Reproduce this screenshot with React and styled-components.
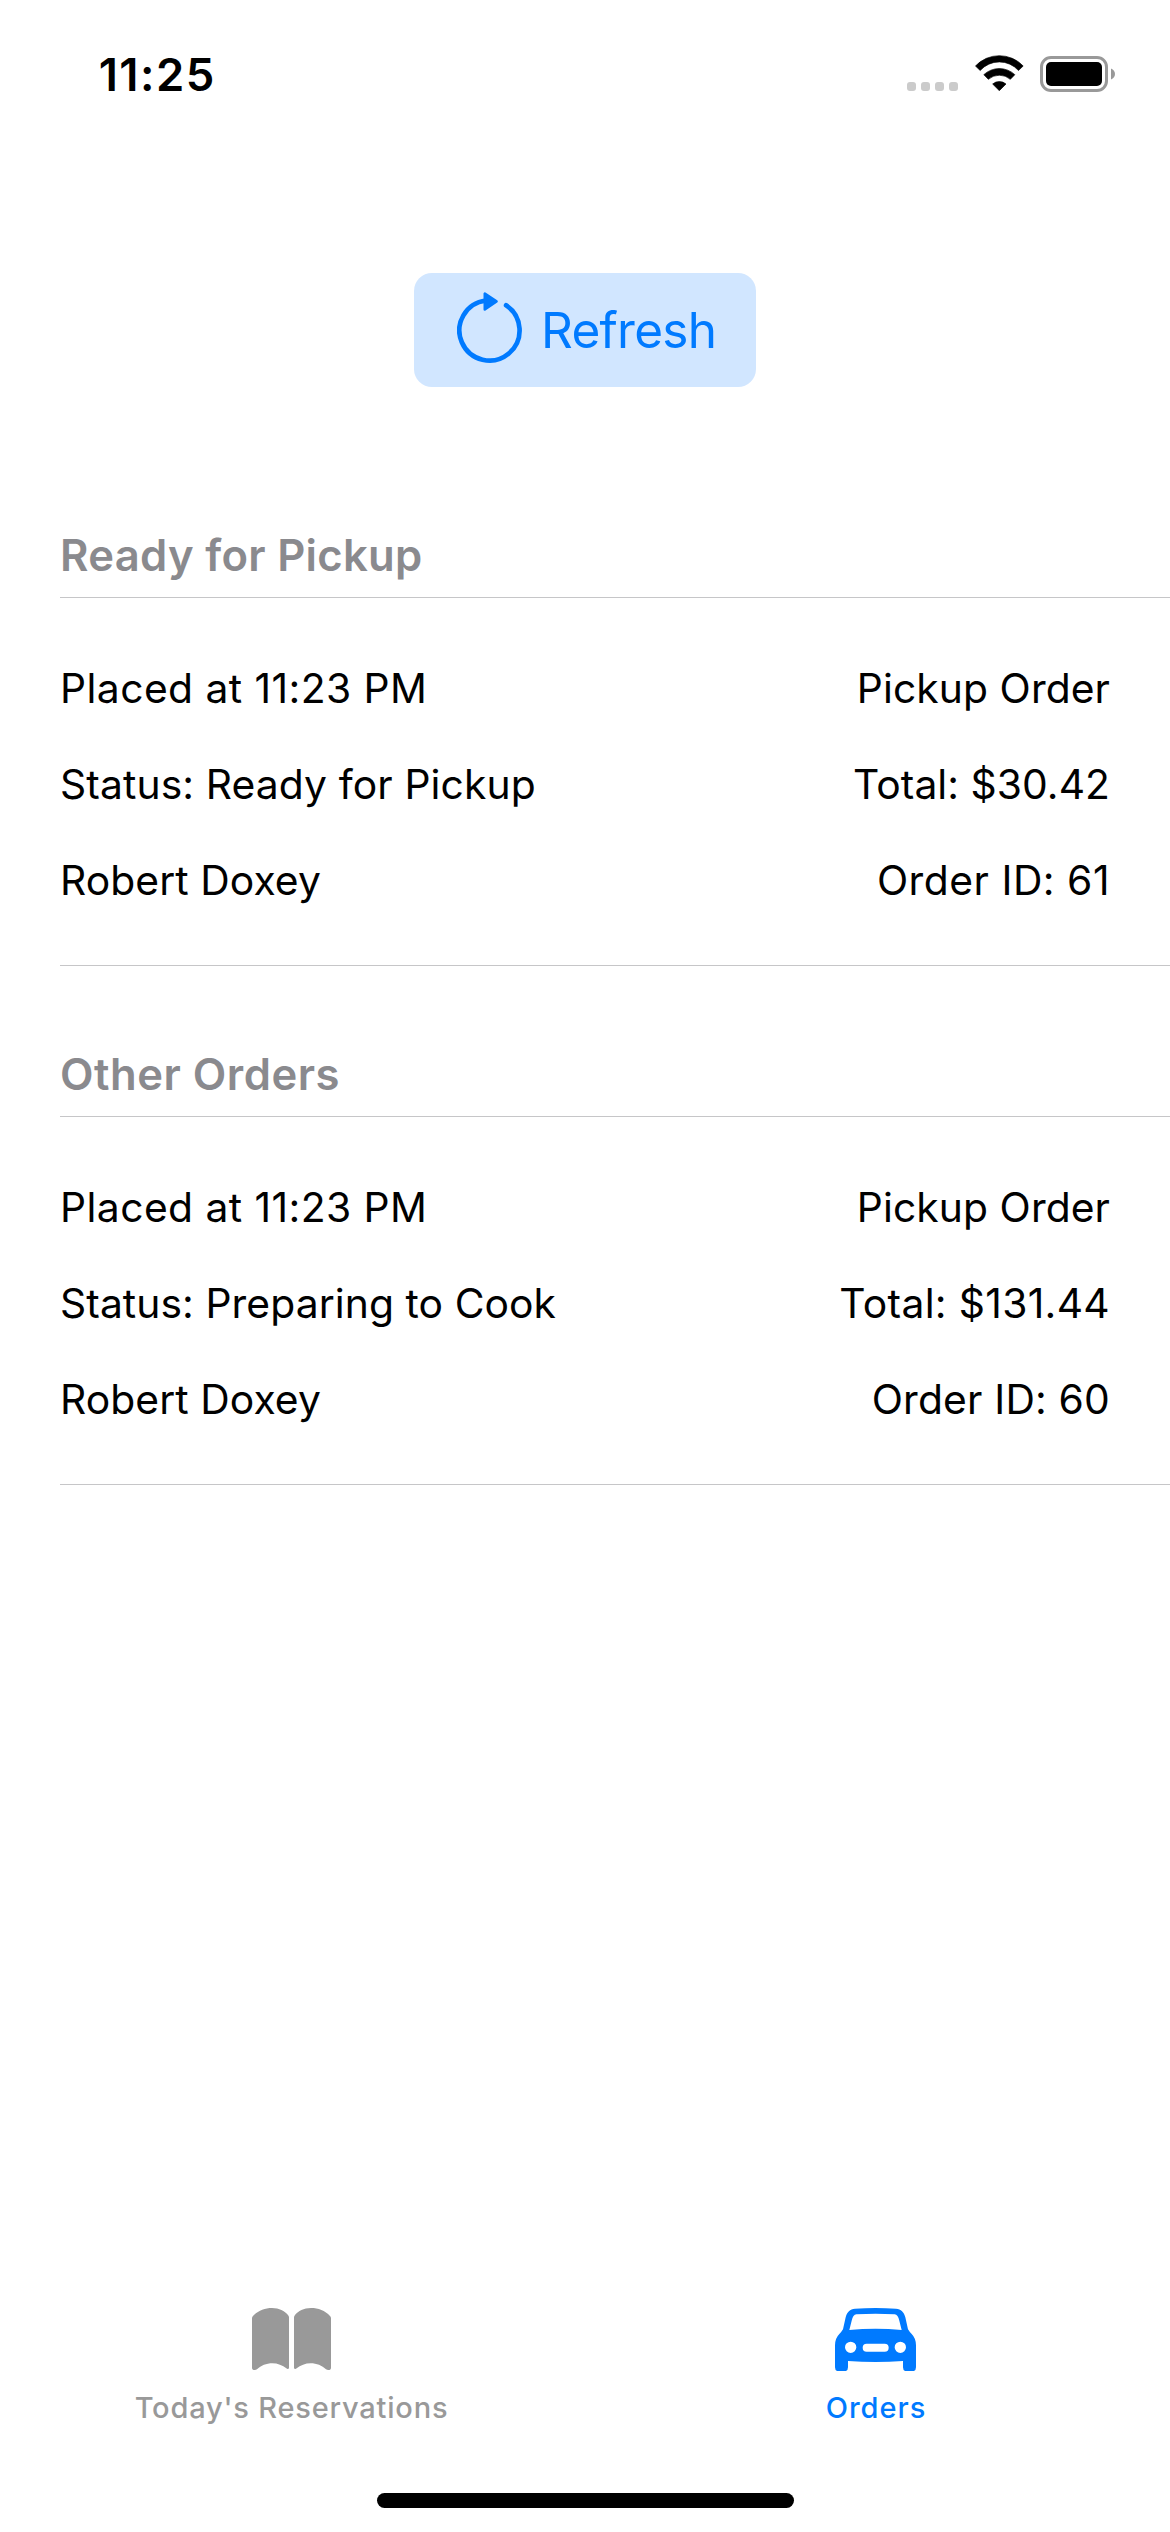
import React from 'react';
import styled, { createGlobalStyle } from 'styled-components';

const GlobalStyle = createGlobalStyle`
  * { box-sizing: border-box; }
  body {
    margin: 0;
    background: #fff;
    color: #000;
    font-family: Inter, "Liberation Sans", sans-serif;
  }
  svg { display: block; flex: none; }
`;

const Screen = styled.div`
  width: 1170px;
  height: 2532px;
  display: flex;
  flex-direction: column;
  background: #fff;
  overflow: hidden;
`;

const StatusBar = styled.header`
  height: 141px;
  flex: none;
  display: flex;
  justify-content: space-between;
  align-items: flex-start;
  padding: 45px 55px 0 98.7px;
`;

const Clock = styled.span`
  font-size: 45.4px;
  font-weight: 600;
  line-height: 59px;
  letter-spacing: 1.465px;
`;

const StatusIcons = styled.div`
  display: flex;
  align-items: flex-end;
  height: 47px;
`;

const SignalDots = styled.div`
  display: flex;
  gap: 5px;
  margin: 0 16.5px 1px 0;
`;

const Dot = styled.i`
  width: 9px;
  height: 9px;
  border-radius: 3px;
  background: #cbcbcb;
`;

const WifiSlot = styled.div`
  margin: 0 16.5px 1px 0;
`;

const Toolbar = styled.div`
  display: flex;
  justify-content: center;
  flex: none;
  padding: 132px 0 138px;
`;

const RefreshButton = styled.button`
  width: 342px;
  height: 114px;
  border: 0;
  border-radius: 18px;
  background: #d1e6ff;
  color: #007aff;
  display: flex;
  align-items: center;
  gap: 18px;
  padding: 0 0 0 43px;
  font-family: inherit;
  font-size: 49.5px;
  line-height: 60px;
  letter-spacing: -0.735px;
`;

const Orders = styled.main`
  flex: 1;
  display: flex;
  flex-direction: column;
  gap: 78px;
`;

const Section = styled.section`
  margin-left: 60px;
`;

const SectionTitle = styled.h2`
  margin: 0;
  border-bottom: 1px solid #c6c6c8;
  color: #8a8a8e;
  font-size: 43.6px;
  font-weight: 600;
  line-height: 62px;
  height: 73px;
  letter-spacing: ${(p) => p.$tracking}px;
`;

const OrderCard = styled.article`
  padding: 42px 60px 37px 0;
  border-bottom: 1px solid #c6c6c8;
`;

const OrderRow = styled.div`
  display: flex;
  justify-content: space-between;
  height: 96px;
  font-size: 40.8px;
  line-height: 96px;
  white-space: nowrap;
`;

const Field = styled.span`
  letter-spacing: ${(p) => p.$tracking}px;
`;

const TabBar = styled.nav`
  flex: none;
  display: grid;
  grid-template-columns: 583px 586px;
  height: 185px;
`;

const Tab = styled.a`
  display: flex;
  flex-direction: column;
  align-items: center;
  color: ${(p) => (p.$active ? '#007aff' : '#999')};
`;

const TabIcon = styled.div`
  height: 81px;
  margin-right: ${(p) => p.$nudge || 0}px;
`;

const TabLabel = styled.span`
  font-size: 29px;
  font-weight: 500;
  line-height: 37px;
  letter-spacing: ${(p) => p.$tracking}px;
`;

const HomeIndicator = styled.div`
  flex: none;
  width: 417px;
  height: 15px;
  margin: 0 0 24px 377px;
  border-radius: 7.5px;
  background: #000;
`;

const WifiIcon = () => (
  <svg width="49" height="36" viewBox="0 0 147 108" fill="#000" stroke="#000" strokeWidth="2" strokeLinejoin="round">
    <path d="M1.5 33A98 98 0 0 1 144.500 33L130.500 46.500A77 77 0 0 0 15.500 46.500Z" />
    <path d="M26.500 59A68 68 0 0 1 119.500 59L106 73A50 50 0 0 0 40 73Z" />
    <path d="M53 87A31 31 0 0 1 93 87L73 107Z" />
  </svg>
);

const BatteryIcon = () => (
  <svg width="75" height="36" viewBox="0 0 75 36">
    <rect x="1.5" y="1.500" width="65" height="33" rx="9.500" fill="none" stroke="#999" strokeWidth="3" />
    <rect x="6" y="6" width="56" height="24" rx="5" fill="#000" />
    <path d="M71 12.500C73.500 13.500 75 15.500 75 18S73.500 22.500 71 23.500Z" fill="#999" />
  </svg>
);

const RefreshIcon = () => (
  <svg width="66" height="76" viewBox="0 0 66 76" fill="none" stroke="currentColor" strokeLinecap="round" strokeLinejoin="round">
    <path d="M49.100 13.300A30.100 30.100 0 1 1 29 8.500" strokeWidth="4.700" />
    <path d="M27.800 1.600V17.400L39.500 9.400Z" fill="currentColor" strokeWidth="2.600" />
  </svg>
);

const pagePath =
  'M0 31Q0 27 3 24C18 8 38 0 60 0C82 0 98 9 108 21Q111 25 111 28V179Q111 183 107 183Q105 183 103 181C92 172 77 166 61 166C43 166 27 173 15 184Q12 186 8 186Q0 186 0 179Z';

const BookIcon = () => (
  <svg width="79" height="62" viewBox="0 0 237 186" fill="currentColor">
    <path d={pagePath} />
    <path d={pagePath} transform="translate(237 0) scale(-1 1)" />
  </svg>
);

const CarIcon = () => (
  <svg width="81" height="63.333" viewBox="0 0 243 190" fill="currentColor" fillRule="evenodd">
    <path
      d="M24 64L32 28C36 12 45 3 60 2Q121.500 -2 183 2C198 3 207 12 211 28L219 64Q223 71 230 78Q243 91 243 112V178Q243 190 231 190H216Q204 190 204 178V159Q121.500 165 39 159V178Q39 190 27 190H12Q0 190 0 178V112Q0 91 13 78Q20 71 24 64Z
      M43 66L50 38Q54 20 64 19Q121.500 15 179 19Q189 20 193 38L200 66Q121.500 58 43 66Z
      M30 118A17 17 0 1 0 64 118A17 17 0 1 0 30 118Z
      M179 118A17 17 0 1 0 213 118A17 17 0 1 0 179 118Z
      M95 107H149A12 12 0 0 1 149 131H95A12 12 0 0 1 95 107Z"
    />
  </svg>
);

const sections = [
  {
    title: 'Ready for Pickup',
    tracking: 0.308,
    rows: [
      [['Placed at 11:23 PM', 0.437], ['Pickup Order', 0.077]],
      [['Status: Ready for Pickup', 0.111], ['Total: $30.42', 0.054]],
      [['Robert Doxey', 0.079], ['Order ID: 61', 0.509]],
    ],
  },
  {
    title: 'Other Orders',
    tracking: 0.511,
    rows: [
      [['Placed at 11:23 PM', 0.437], ['Pickup Order', 0.077]],
      [['Status: Preparing to Cook', 0.077], ['Total: $131.44', 0.32]],
      [['Robert Doxey', 0.079], ['Order ID: 60', 0.182]],
    ],
  },
];

export default function App() {
  return (
    <Screen>
      <GlobalStyle />
      <StatusBar>
        <Clock>11:25</Clock>
        <StatusIcons>
          <SignalDots>
            <Dot />
            <Dot />
            <Dot />
            <Dot />
          </SignalDots>
          <WifiSlot>
            <WifiIcon />
          </WifiSlot>
          <BatteryIcon />
        </StatusIcons>
      </StatusBar>
      <Toolbar>
        <RefreshButton type="button">
          <RefreshIcon />
          Refresh
        </RefreshButton>
      </Toolbar>
      <Orders>
        {sections.map((section) => (
          <Section key={section.title}>
            <SectionTitle $tracking={section.tracking}>{section.title}</SectionTitle>
            <OrderCard>
              {section.rows.map((row) => (
                <OrderRow key={row[0][0]}>
                  {row.map(([text, tracking]) => (
                    <Field key={text} $tracking={tracking}>
                      {text}
                    </Field>
                  ))}
                </OrderRow>
              ))}
            </OrderCard>
          </Section>
        ))}
      </Orders>
      <TabBar>
        <Tab>
          <TabIcon>
            <BookIcon />
          </TabIcon>
          <TabLabel $tracking={0.805}>Today's Reservations</TabLabel>
        </Tab>
        <Tab $active>
          <TabIcon $nudge={1}>
            <CarIcon />
          </TabIcon>
          <TabLabel $tracking={0.986}>Orders</TabLabel>
        </Tab>
      </TabBar>
      <HomeIndicator />
    </Screen>
  );
}
